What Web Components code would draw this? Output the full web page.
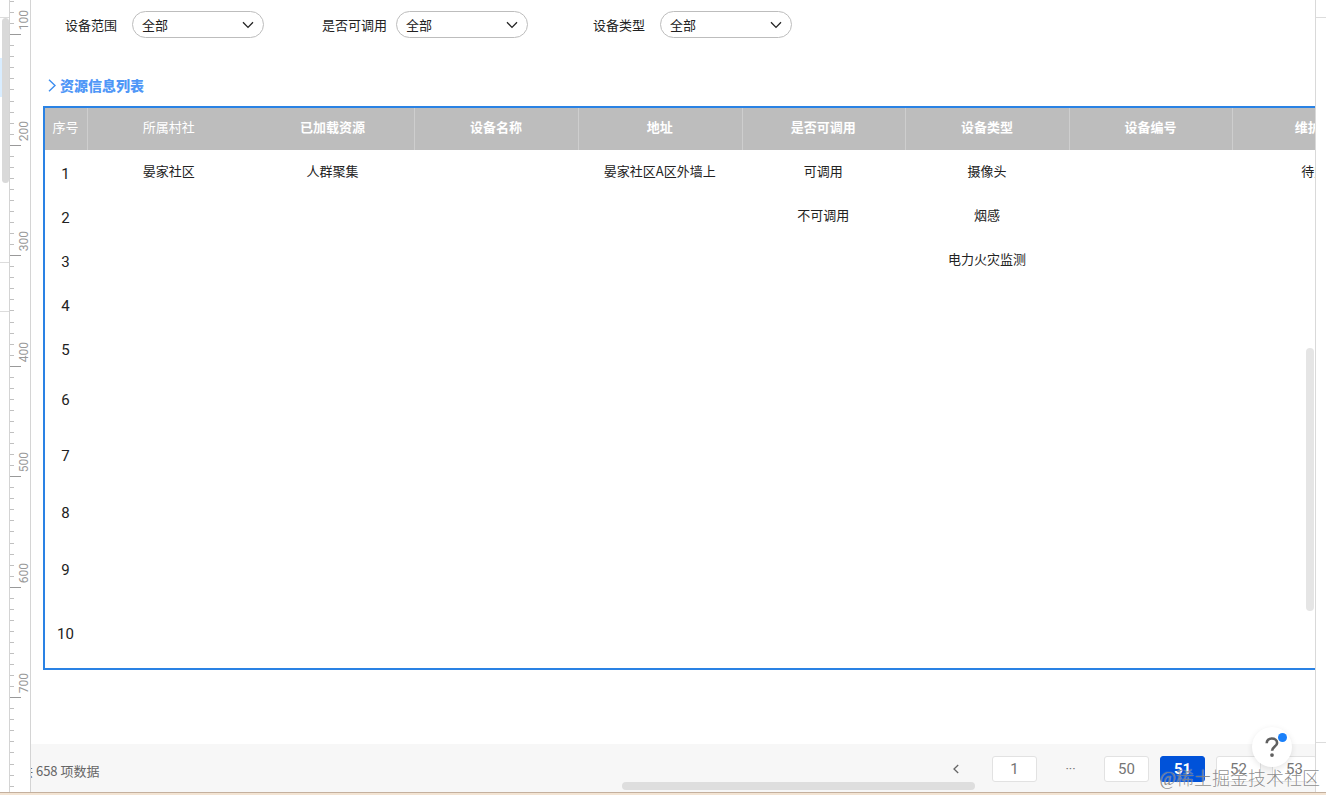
<!DOCTYPE html>
<html lang="zh-CN">
<head>
<meta charset="utf-8">
<title>资源信息列表</title>
<style>
  html, body { height: 100%; margin: 0; }
  body {
    overflow: hidden;
    background: #fff;
    color: #222;
    font: 13px/20px "Noto Sans CJK SC", sans-serif;
  }
</style>
</head>
<body>
<design-editor>
  <layer-rail slot="left"></layer-rail>
  <v-ruler slot="ruler" from="100" to="800"></v-ruler>
  <filter-bar>
    <filter-field label="设备范围"></filter-field>
    <filter-field label="是否可调用"></filter-field>
    <filter-field label="设备类型"></filter-field>
  </filter-bar>
  <section-title>资源信息列表</section-title>
  <resource-table></resource-table>
  <page-footer slot="footer" total="658"></page-footer>
  <help-button slot="overlay"></help-button>
  <water-mark slot="mark">@稀土掘金技术社区</water-mark>
</design-editor>

<script>
function define(name, html, setup) {
  const template = document.createElement('template');
  template.innerHTML = html;
  customElements.define(name, class extends HTMLElement {
    constructor() {
      super();
      this.attachShadow({ mode: 'open' }).append(template.content.cloneNode(true));
    }
    connectedCallback() { if (setup) setup(this, this.shadowRoot); }
  });
}

define('design-editor', `
  <style>
    :host { display: grid; grid-template: 1fr 3px / 9px 22px 1fr 10px; height: 100vh; position: relative; }
    .canvas {
      position: relative; overflow: hidden; min-width: 0; min-height: 0;
      display: flex; flex-direction: column; border-right: 1px solid #d9d9d9; background: #fff;
    }
    .content { flex: 1; min-height: 0; }
    .inspector { display: flex; flex-direction: column; }
    .inspector i { border-bottom: 1px solid #dcdcdc; box-sizing: border-box; }
    .inspector i:first-child { height: 18px; }
    .inspector i:last-child { flex: 1; margin-bottom: 49px; }
    .edge { grid-column: 1 / -1; background: #f3e4d3; border-top: 1px solid #c4b09e; }
    .bar { position: absolute; border-radius: 4px; background: #dedede; }
    .vbar { right: 1px; top: 44%; width: 8px; height: 263px; background: #e5e5e5; }
    .hbar { left: 46%; bottom: 2px; height: 8px; width: 353px; }
    ::slotted(*) { min-width: 0; min-height: 0; }
  </style>
  <slot name="left"></slot>
  <slot name="ruler"></slot>
  <main class="canvas">
    <div class="content"><slot></slot></div>
    <slot name="footer"></slot>
    <div class="bar vbar"></div><div class="bar hbar"></div>
    <slot name="overlay"></slot>
  </main>
  <aside class="inspector"><i></i><i></i></aside>
  <div class="edge"></div>
  <slot name="mark"></slot>
`);

define('layer-rail', `
  <style>
    :host { display: block; position: relative; overflow: hidden; }
    .rows { display: grid; grid-template-rows: 18px 40px 39px 166px 49px; }
    .rows div { border-bottom: 1px solid #dcdcdc; }
    .rows .plain { border: 0; }
    .rows .active { border: 0; background: #d9edff; }
    .thumb { position: absolute; top: 18px; left: 2px; width: 7px; height: 165px; border-radius: 4px; background: #d9d9d9; }
  </style>
  <div class="rows"><div></div><div class="plain"></div><div class="active"></div><div></div><div></div></div>
  <div class="thumb"></div>
`);

define('v-ruler', `
  <style>
    :host { display: block; overflow: hidden; border: solid #d4d4d4; border-width: 0 1px; box-sizing: border-box; }
    .scale { margin-top: -75px; }
    .unit { height: 110px; display: grid; grid-template-columns: 8px 1fr; }
    .unit:nth-child(even) { height: 111px; }
    .ticks { display: flex; flex-direction: column; }
    .ticks i { flex: 1; width: 4px; border-bottom: 1px solid #c0c0c0; }
    .ticks i:last-child { width: 11px; border-color: #999; }
    .num {
      writing-mode: vertical-rl; transform: rotate(180deg); align-self: end; justify-self: end;
      margin-bottom: 5px; padding: 0; font: 12px/12px Roboto, sans-serif; color: #999;
    }
  </style>
  <div class="scale"></div>
`, (host, root) => {
  const scale = root.querySelector('.scale');
  scale.replaceChildren();
  for (let n = +host.getAttribute('from'); n <= +host.getAttribute('to'); n += 100) {
    const unit = document.createElement('div');
    unit.className = 'unit';
    unit.innerHTML = `<div class="ticks">${'<i></i>'.repeat(10)}</div>` +
      (n < 800 ? `<span class="num">${n}</span>` : '');
    scale.append(unit);
  }
});

define('filter-bar', `
  <style>
    :host { display: flex; padding: 11px 0 0 34px; }
    ::slotted(:nth-child(2)) { margin-left: 58px; --gap: 9px; }
    ::slotted(:nth-child(3)) { margin-left: 65px; }
  </style>
  <slot></slot>
`);

define('filter-field', `
  <style>
    :host { display: flex; align-items: center; gap: var(--gap, 15px); }
    .box { display: grid; align-items: center; width: 132px; }
    select, svg { grid-area: 1 / 1; }
    select {
      appearance: none; width: 100%; height: 27px; box-sizing: border-box; padding: 0 28px 0 9px;
      border: 1px solid #bdbdbd; border-radius: 14px; background: #fff; color: inherit; font: inherit;
    }
    svg { justify-self: end; margin-right: 10px; pointer-events: none; }
  </style>
  <label for="s"></label>
  <div class="box">
    <select id="s"><option>全部</option></select>
    <svg width="12" height="8" viewBox="0 0 12 8" fill="none" stroke="#222" stroke-width="1.3"><path d="M1 1.2 6 6.4 11 1.2"/></svg>
  </div>
`, (host, root) => { root.querySelector('label').textContent = host.getAttribute('label'); });

define('section-title', `
  <style>
    :host { display: block; padding: 37px 0 11px 17px; }
    h2 { display: flex; align-items: center; gap: 4px; margin: 0; font-size: 14px; line-height: 20px; font-weight: 900; color: #4f97f7; }
  </style>
  <h2><svg width="8" height="13" viewBox="0 0 8 13" fill="none" stroke="#3d8ef0" stroke-width="1.4"><path d="M1 .8 7 6.5 1 12.2"/></svg><slot></slot></h2>
`);

define('resource-table', `
  <style>
    :host { display: block; margin-left: 12px; border: 2px solid #2a82e4; border-right: 0; overflow: hidden; }
    table { min-width: 1352px; width: 100%; table-layout: fixed; border-collapse: separate; border-spacing: 0; }
    th, td { padding: 0 2px 2px 0; text-align: center; font-weight: 400; white-space: nowrap; }
    col:first-child { width: 43px; }
    thead th { height: 38px; padding: 0 1px 4px 0; background: #bdbdbd; color: #fff; font-weight: 700; border-right: 1px solid #cecece; }
    thead th:nth-child(-n+2) { font-weight: 400; }
    thead th:nth-child(2) { border-color: #bdbdbd; }
    tbody tr { height: 44px; }
    tbody tr:nth-child(n+6) { height: 56px; }
    tbody tr:nth-child(n+8) { height: 57px; }
    tbody tr:last-child { height: 72px; }
    tbody th { padding: 4px 2px 0 0; font: 15px/20px Roboto, sans-serif; }
  </style>
  <table>
    <colgroup><col><col span="8"></colgroup>
    <thead><tr></tr></thead>
    <tbody></tbody>
  </table>
`, (host, root) => {
  const heads = ['序号', '所属村社', '已加载资源', '设备名称', '地址', '是否可调用', '设备类型', '设备编号', '维护人'];
  const rows = [
    ['晏家社区', '人群聚集', '', '晏家社区A区外墙上', '可调用', '摄像头', '', '待定'],
    ['', '', '', '', '不可调用', '烟感', '', ''],
    ['', '', '', '', '', '电力火灾监测', '', '']
  ];
  root.querySelector('thead tr').innerHTML = heads.map(h => `<th scope="col">${h}</th>`).join('');
  root.querySelector('tbody').innerHTML = Array.from({ length: 10 }, (_, i) =>
    `<tr><th scope="row">${i + 1}</th>${(rows[i] || Array(8).fill('')).map(c => `<td>${c}</td>`).join('')}</tr>`).join('');
});

define('page-footer', `
  <style>
    :host {
      display: flex; align-items: center; height: 48px; background: #f7f7f7; overflow: hidden; color: #666;
    }
    p { margin: 6px 0 0 -11px; white-space: nowrap; }
    nav { display: flex; gap: 11px; margin: 2px -2px 0 auto; flex: none; }
    button, span {
      width: 45px; height: 26px; box-sizing: border-box; padding: 0; display: grid; place-items: center;
      border: 1px solid #e2e2e2; border-radius: 3px; background: #fff; color: #757575; font: 15px/20px Roboto, sans-serif;
    }
    .prev, span { border-color: transparent; background: none; }
    .prev { width: 51px; }
    span { font-size: 13px; }
    [aria-current] { background: #0052d9; border-color: #0052d9; color: #fff; font-weight: 700; }
  </style>
  <p></p>
  <nav aria-label="分页">
    <button class="prev" aria-label="上一页"><svg width="6" height="10" viewBox="0 0 6 10" fill="none" stroke="#666" stroke-width="1.3"><path d="M5.2 1 1 5l4.200 4"/></svg></button>
    <button>1</button><span>···</span><button>50</button><button aria-current="page">51</button><button>52</button><button>53</button>
  </nav>
`, (host, root) => { root.querySelector('p').textContent = `共 ${host.getAttribute('total')} 项数据`; });

define('help-button', `
  <style>
    :host { position: absolute; right: 23px; bottom: 25px; }
    button {
      display: grid; place-items: center; width: 40px; height: 40px; padding: 0; border: 0; border-radius: 50%;
      background: #fff; box-shadow: 0 2px 6px rgba(0, 0, 0, .1);
    }
    i { position: absolute; top: 6px; right: 5px; width: 9px; height: 9px; border-radius: 50%; background: #1a80fa; }
  </style>
  <button aria-label="帮助"><svg width="14" height="20" viewBox="0 0 14 20" fill="none" stroke="#606060" stroke-width="2.600"><path d="M1.700 6.200C1.700 3.200 3.800 1.500 6.800 1.500s5.300 1.600 5.300 4.400c0 3.600-5 3.700-5 7.900"/><circle cx="7" cy="18.100" r="1.900" fill="#606060" stroke="none"/></svg></button>
  <i></i>
`);

define('water-mark', `
  <style>
    :host {
      position: absolute; right: 6px; bottom: 3px; pointer-events: none; white-space: nowrap;
      font: 300 18px/26px "Liberation Serif", "Noto Sans CJK SC", serif; color: rgba(90, 90, 90, .7);
      text-shadow: 0 0 1px rgba(255, 255, 255, .8);
    }
  </style>
  <slot></slot>
`);
</script>
</body>
</html>
